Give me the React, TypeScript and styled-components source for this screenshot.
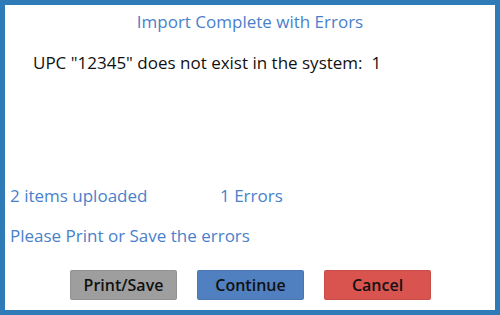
import React from "react";
import styled, { createGlobalStyle } from "styled-components";

const Global = createGlobalStyle`
  html, body { margin: 0; padding: 0; background: #fff; }
  body { font-family: "Open Sans", "Noto Sans", sans-serif; }
`;

const Frame = styled.div`
  box-sizing: border-box;
  width: 500px;
  height: 315px;
  border: 5px solid #2e7bb8;
  background: #fff;
  display: flex;
  flex-direction: column;
`;

const Title = styled.div`
  color: #4a7fcb;
  font-size: 17px;
  line-height: 22px;
  text-align: center;
  margin-top: 6px;
`;

const ErrorLine = styled.div`
  color: #111;
  font-size: 17px;
  line-height: 22px;
  margin-top: 19px;
  padding-left: 28px;
`;

const Spacer = styled.div`
  flex: 1;
`;

const Stats = styled.div`
  display: flex;
  color: #4a7fcb;
  font-size: 17px;
  line-height: 22px;
  padding-left: 5px;
`;

const Stat = styled.span<{ $w?: number }>`
  width: ${(p) => (p.$w ? `${p.$w}px` : "auto")};
`;

const Note = styled.div`
  color: #4a7fcb;
  font-size: 17px;
  line-height: 22px;
  padding-left: 5px;
  margin-top: 18px;
`;

const Buttons = styled.div`
  display: flex;
  justify-content: center;
  gap: 20px;
  margin-top: 23px;
  margin-bottom: 10px;
  padding-left: 1px;
`;

const Button = styled.button<{ $bg: string }>`
  box-sizing: border-box;
  width: 107px;
  height: 30px;
  border: 1px solid rgba(0,0,0,0.08);
  border-radius: 2px;
  background: ${(p) => p.$bg};
  color: #111;
  font-family: "Open Sans", "Noto Sans", sans-serif;
  font-size: 16px;
  font-weight: 600;
  padding: 0;
`;

export default function App() {
  return (
    <>
      <Global />
      <Frame>
        <Title>Import Complete with Errors</Title>
        <ErrorLine>UPC "12345" does not exist in the system:&nbsp; 1</ErrorLine>
        <Spacer />
        <Stats>
          <Stat $w={210}>2 items uploaded</Stat>
          <Stat>1 Errors</Stat>
        </Stats>
        <Note>Please Print or Save the errors</Note>
        <Buttons>
          <Button $bg="#9e9e9e">Print/Save</Button>
          <Button $bg="#5180c0">Continue</Button>
          <Button $bg="#d9534f">Cancel</Button>
        </Buttons>
      </Frame>
    </>
  );
}
